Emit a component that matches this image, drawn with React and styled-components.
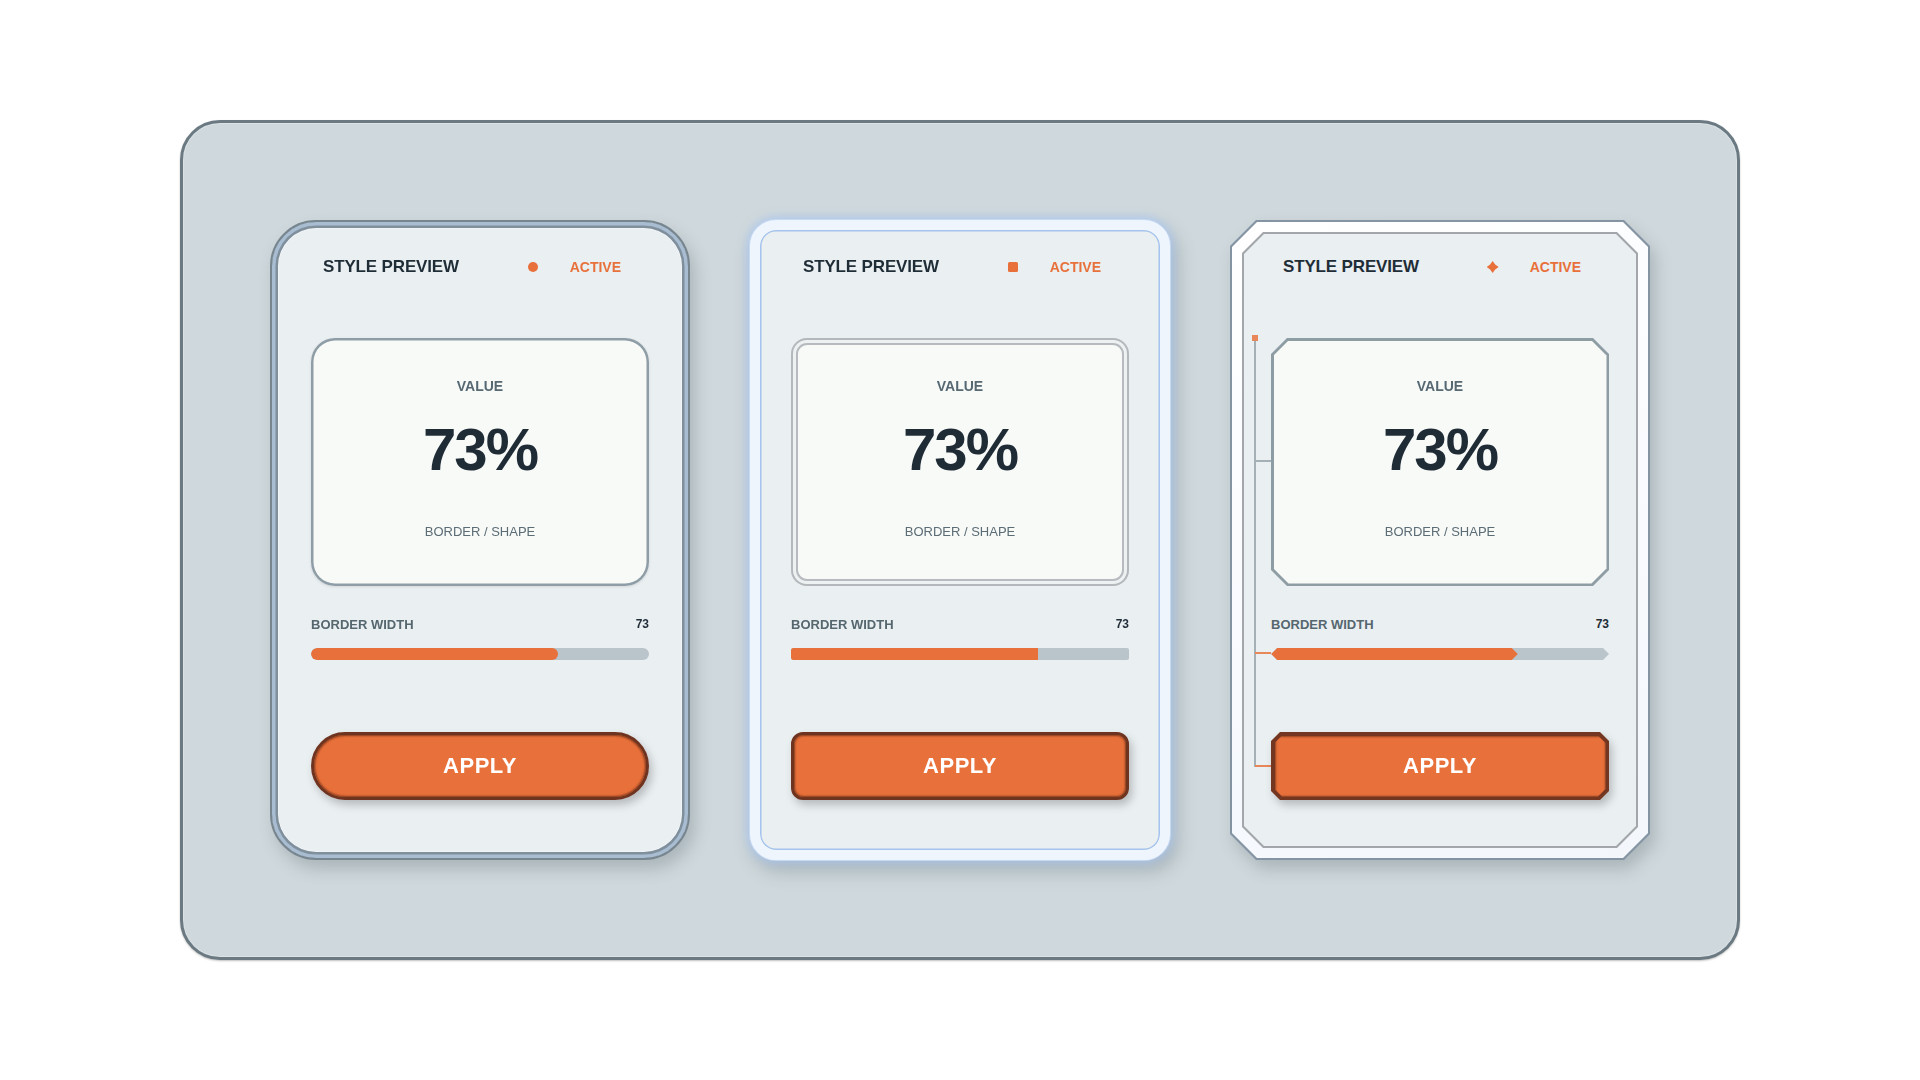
import React from "react";
import styled, { createGlobalStyle, css } from "styled-components";

const ORANGE = "#e8703a";
const FACE = "#eaeff2";

const chamfer = (c) =>
  `polygon(${c}px 0, calc(100% - ${c}px) 0, 100% ${c}px, 100% calc(100% - ${c}px), calc(100% - ${c}px) 100%, ${c}px 100%, 0 calc(100% - ${c}px), 0 ${c}px)`;

const hexTrack = (p) =>
  `polygon(${p}px 0, calc(100% - ${p}px) 0, 100% 50%, calc(100% - ${p}px) 100%, ${p}px 100%, 0 50%)`;

const FRAME = { round: 2, glow: 10, chamfer: 14 };

const GlobalStyle = createGlobalStyle`
  html, body { margin: 0; padding: 0; background: #ffffff; }
  body { font-family: "Liberation Sans", Arial, Helvetica, sans-serif; }
  *, *::before, *::after { box-sizing: border-box; }
`;

const Page = styled.main`
  width: 100%;
  height: 100vh;
  display: flex;
  align-items: center;
  justify-content: center;
`;

const Panel = styled.section`
  width: 1560px;
  height: 840px;
  border: 3px solid #6b7a82;
  border-radius: 40px;
  background: #cfd8dc;
  box-shadow: inset 0 0 0 1px rgba(255, 255, 255, 0.25), 0 1px 2px rgba(0, 0, 0, 0.25);
  display: flex;
  align-items: center;
  justify-content: center;
  gap: 60px;
`;

const CardShell = styled.div`
  width: 420px;
  height: 640px;
  flex-shrink: 0;
  filter: drop-shadow(5px 9px 8px rgba(40, 60, 70, 0.22));
`;

const CardFrame = styled.div`
  position: relative;
  height: 100%;
  ${({ $variant }) =>
    $variant === "round" &&
    css`
      border-radius: 46px;
      border: 2px solid #77858f;
      background: ${FACE};
      box-shadow: inset 0 0 0 3.5px #a8bcd2, inset 0 0 0 6px #7f8f9c,
        inset 0 0 0 7px #f2f5f7;
    `}
  ${({ $variant }) =>
    $variant === "glow" &&
    css`
      border-radius: 26px;
      border: 10px solid #eef5fd;
      background: ${FACE};
      box-shadow: inset 0 0 0 1.5px #a5c3ec, 0 0 0 1px #c6d9f2,
        0 0 10px 3px rgba(170, 200, 245, 0.75);
    `}
  ${({ $variant }) =>
    $variant === "chamfer" &&
    css`
      padding: 14px;
      background: #8494a3;
      clip-path: ${chamfer(26)};
      &::before {
        content: "";
        position: absolute;
        inset: 2px;
        background: linear-gradient(160deg, #ffffff, #f3f7fc);
        clip-path: ${chamfer(25)};
      }
      &::after {
        content: "";
        position: absolute;
        inset: 12px;
        background: #a3a7ab;
        clip-path: ${chamfer(21)};
      }
    `}
`;

const CardBody = styled.div`
  position: relative;
  z-index: 1;
  height: 100%;
  display: flex;
  flex-direction: column;
  padding: ${({ $variant }) => {
    const f = FRAME[$variant];
    return `${35 - f}px ${41 - f}px ${60 - f}px`;
  }};
  ${({ $variant }) =>
    $variant === "chamfer" &&
    css`
      background: ${FACE};
      clip-path: ${chamfer(20)};
    `}
`;

const Header = styled.header`
  height: 24px;
  flex-shrink: 0;
  display: flex;
  align-items: center;
  justify-content: space-between;
  padding: 0 28px 0 12px;
`;

const Title = styled.h2`
  margin: 0;
  font-size: 17px;
  font-weight: 700;
  letter-spacing: -0.15px;
  color: #1f2d37;
`;

const Status = styled.div`
  display: flex;
  align-items: center;
  gap: 32px;
`;

const Dot = styled.span`
  display: block;
  background: ${ORANGE};
  ${({ $variant }) =>
    $variant === "round" &&
    css`
      width: 10px;
      height: 10px;
      border-radius: 50%;
    `}
  ${({ $variant }) =>
    $variant === "glow" &&
    css`
      width: 10px;
      height: 10px;
      border-radius: 1.5px;
    `}
  ${({ $variant }) =>
    $variant === "chamfer" &&
    css`
      width: 12px;
      height: 12px;
      margin: 0 -1px;
      clip-path: polygon(50% 0, 71% 29%, 100% 50%, 71% 71%, 50% 100%, 29% 71%, 0 50%, 29% 29%);
    `}
`;

const StatusText = styled.span`
  font-size: 14px;
  font-weight: 700;
  color: ${ORANGE};
`;

const ValueBox = styled.div`
  position: relative;
  isolation: isolate;
  margin-top: 59px;
  height: 248px;
  flex-shrink: 0;
  display: flex;
  flex-direction: column;
  align-items: center;
  padding-top: 40px;
  ${({ $variant }) =>
    $variant === "round" &&
    css`
      background: #f8faf8;
      border-radius: 24px;
      box-shadow: inset 0 0 0 2.5px #8e9da6, 0 1px 3px rgba(0, 0, 0, 0.1);
    `}
  ${({ $variant }) =>
    $variant === "glow" &&
    css`
      background: #f8faf8;
      border-radius: 16px;
      box-shadow: inset 0 0 0 2px #b4b8bc, inset 0 0 0 5px #eef1f1,
        inset 0 0 0 7px #b7bbbf;
    `}
  ${({ $variant }) =>
    $variant === "chamfer" &&
    css`
      background: #8e9ca4;
      clip-path: ${chamfer(16)};
      &::before {
        content: "";
        position: absolute;
        inset: 2.5px;
        z-index: -1;
        background: #f8faf8;
        clip-path: ${chamfer(15)};
      }
    `}
`;

const ValueLabel = styled.div`
  font-size: 14px;
  line-height: 16px;
  font-weight: 700;
  color: #566973;
`;

const BigValue = styled.div`
  margin-top: 24px;
  font-size: 60px;
  line-height: 64px;
  font-weight: 700;
  letter-spacing: -2px;
  color: #1f2c36;
`;

const Caption = styled.div`
  margin-top: 42px;
  font-size: 13px;
  line-height: 16px;
  color: #5b6c75;
`;

const SliderHead = styled.div`
  margin-top: 30px;
  height: 16px;
  flex-shrink: 0;
  display: flex;
  align-items: center;
  justify-content: space-between;
`;

const SliderLabel = styled.span`
  font-size: 13px;
  font-weight: 700;
  color: #56676f;
`;

const SliderValue = styled.span`
  font-size: 12px;
  font-weight: 700;
  color: #1f2c36;
`;

const Track = styled.div`
  position: relative;
  margin-top: 16px;
  height: 12px;
  flex-shrink: 0;
  background: #bac5cb;
  overflow: hidden;
  ${({ $variant }) => $variant === "round" && css`border-radius: 6px;`}
  ${({ $variant }) => $variant === "glow" && css`border-radius: 2px;`}
  ${({ $variant }) => $variant === "chamfer" && css`clip-path: ${hexTrack(6)};`}
`;

const Fill = styled.div`
  height: 100%;
  background: ${ORANGE};
  ${({ $variant }) => $variant === "round" && css`border-radius: 6px;`}
  ${({ $variant }) => $variant === "glow" && css`border-radius: 2px 0 0 2px;`}
  ${({ $variant }) => $variant === "chamfer" && css`clip-path: ${hexTrack(6)};`}
`;

const ButtonWrap = styled.div`
  margin-top: auto;
  height: 68px;
  flex-shrink: 0;
  filter: drop-shadow(3px 5px 4px rgba(0, 0, 0, 0.22));
`;

const Button = styled.button`
  position: relative;
  isolation: isolate;
  width: 100%;
  height: 100%;
  font-family: "Liberation Sans", Arial, sans-serif;
  font-size: 22px;
  font-weight: 700;
  letter-spacing: 0.5px;
  color: #ffffff;
  cursor: pointer;
  ${({ $variant }) =>
    ($variant === "round" || $variant === "glow") &&
    css`
      background: ${ORANGE};
      border: 3.5px solid #6f3420;
      border-radius: ${$variant === "round" ? "34px" : "12px"};
      box-shadow: inset 0 0 2px 1px rgba(90, 35, 15, 0.7);
    `}
  ${({ $variant }) =>
    $variant === "chamfer" &&
    css`
      border: none;
      background: #723621;
      clip-path: ${chamfer(9)};
      &::before {
        content: "";
        position: absolute;
        inset: 3.5px;
        z-index: -1;
        background: ${ORANGE};
        box-shadow: inset 0 0 2px 1px rgba(90, 35, 15, 0.6);
        clip-path: ${chamfer(7.5)};
      }
    `}
`;

const ConnectorLine = styled.span`
  position: absolute;
  left: 10px;
  top: 104px;
  width: 2px;
  height: 429px;
  background: #a4b0b6;
`;

const ConnectorNode = styled.span`
  position: absolute;
  left: 8px;
  top: 101px;
  width: 6px;
  height: 6px;
  background: #e8875a;
`;

const ConnectorTick = styled.span`
  position: absolute;
  left: 11px;
  width: 16px;
  height: 2px;
  background: ${({ $accent }) => ($accent ? "#e8875a" : "#a4b0b6")};
`;

const Connector = () => (
  <>
    <ConnectorLine />
    <ConnectorNode />
    <ConnectorTick style={{ top: 226 }} />
    <ConnectorTick $accent style={{ top: 418 }} />
    <ConnectorTick $accent style={{ top: 531 }} />
  </>
);

const VALUE = 73;

const PreviewCard = ({ variant }) => (
  <CardShell>
    <CardFrame $variant={variant}>
      <CardBody $variant={variant}>
        {variant === "chamfer" && <Connector />}
        <Header>
          <Title>STYLE PREVIEW</Title>
          <Status>
            <Dot $variant={variant} />
            <StatusText>ACTIVE</StatusText>
          </Status>
        </Header>
        <ValueBox $variant={variant}>
          <ValueLabel>VALUE</ValueLabel>
          <BigValue>{VALUE}%</BigValue>
          <Caption>BORDER / SHAPE</Caption>
        </ValueBox>
        <SliderHead>
          <SliderLabel>BORDER WIDTH</SliderLabel>
          <SliderValue>{VALUE}</SliderValue>
        </SliderHead>
        <Track $variant={variant}>
          <Fill $variant={variant} style={{ width: `${VALUE}%` }} />
        </Track>
        <ButtonWrap>
          <Button $variant={variant}>APPLY</Button>
        </ButtonWrap>
      </CardBody>
    </CardFrame>
  </CardShell>
);

export default function App() {
  return (
    <>
      <GlobalStyle />
      <Page>
        <Panel>
          <PreviewCard variant="round" />
          <PreviewCard variant="glow" />
          <PreviewCard variant="chamfer" />
        </Panel>
      </Page>
    </>
  );
}
